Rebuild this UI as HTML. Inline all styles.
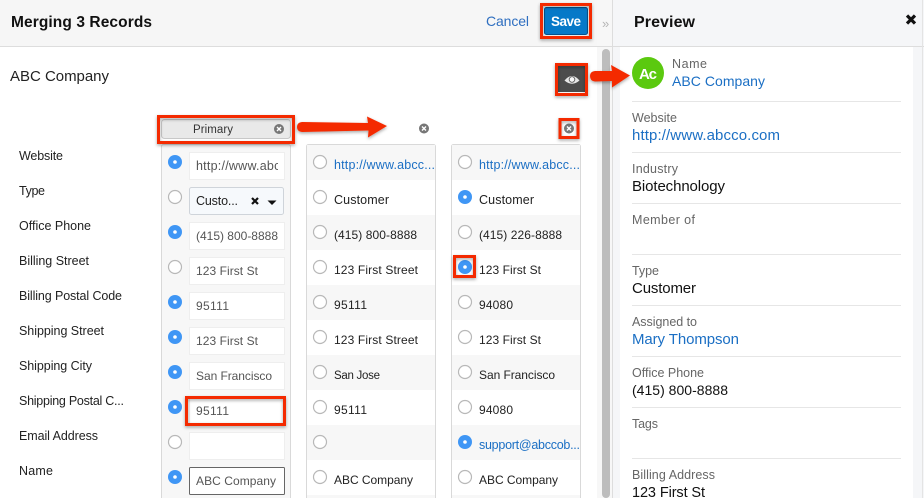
<!DOCTYPE html>
<html><head><meta charset="utf-8"><style>
html,body{margin:0;padding:0;background:#fff;width:924px;height:498px;overflow:hidden}
svg{display:block}
text{font-family:"Liberation Sans",sans-serif;font-size:12.5px;fill:#222}
.n{font-size:12px}
.g{fill:#555}
.v{fill:#111;font-size:15px}
.l{fill:#1b6fc4;font-size:15px}
.p{fill:#666}
.d{fill:#1b6fc4;font-size:12.5px}
.ln{stroke:#e6e6e6;stroke-width:1}
.inp{fill:#fff;stroke:#eee;stroke-width:1}
.off{fill:#fff;stroke:#b8b8b8;stroke-width:1.2}
.red{fill:none;stroke:#f42a05;stroke-width:3}
</style></head><body>
<svg width="924" height="498" viewBox="0 0 924 498" xmlns="http://www.w3.org/2000/svg">
<defs>
<filter id="s" x="-20%" y="-40%" width="140%" height="180%"><feDropShadow dx="0" dy="1.5" stdDeviation="1.5" flood-color="#000" flood-opacity=".35"/></filter>
</defs>
<rect width="924" height="498" fill="#fff"/>
<!-- header -->
<rect x="0" y="0" width="612" height="46" fill="#f6f6f6"/>
<rect x="612" y="0" width="312" height="498" fill="#f5f6f8"/>
<rect x="620" y="47" width="293" height="451" fill="#fff"/>
<rect x="597" y="0" width="15" height="498" fill="#f7f7f7"/>
<rect x="0" y="46" width="924" height="1" fill="#ddd"/>
<rect x="612" y="0" width="1" height="498" fill="#ddd"/>
<rect x="922" y="0" width="1" height="498" fill="#e4e4e4"/>
<rect x="602" y="49" width="8" height="449" rx="4" fill="#bdbdbd"/>
<text x="11" y="27" textLength="141" style="font-size:15.5px;font-weight:bold;fill:#111">Merging 3 Records</text>
<text x="486" y="26" textLength="43" style="font-size:14px;fill:#2f6fc0">Cancel</text>
<rect x="544.500" y="7.500" width="43" height="27" rx="2" fill="#0679c8" stroke="#04538f"/>
<text x="551" y="26" textLength="30" style="font-size:13.5px;font-weight:bold;fill:#fff">Save</text>
<text x="602" y="28" textLength="9" style="font-size:13px;fill:#b5b5b5">»</text>
<text x="634" y="27" textLength="61" style="font-size:16px;font-weight:bold;fill:#111">Preview</text>
<path d="M907 15.500l8 8M915 15.500l-8 8" stroke="#111" stroke-width="3.2" fill="none"/>

<text x="10" y="81" textLength="99" style="font-size:15px;fill:#222">ABC Company</text>

<!-- labels -->
<text x="19" y="160" textLength="44">Website</text>
<text x="19" y="195" textLength="26">Type</text>
<text x="19" y="230" textLength="72">Office Phone</text>
<text x="19" y="265" textLength="70">Billing Street</text>
<text x="19" y="300" textLength="103">Billing Postal Code</text>
<text x="19" y="335" textLength="85">Shipping Street</text>
<text x="19" y="370" textLength="73">Shipping City</text>
<text x="19" y="405" textLength="105">Shipping Postal C...</text>
<text x="19" y="440" textLength="79">Email Address</text>
<text x="19" y="475" textLength="34">Name</text>

<!-- column 1 -->
<rect x="161.500" y="144.500" width="129" height="360" rx="2" fill="#f7f7f7" stroke="#d9d9d9"/>
<rect x="189.500" y="152.500" width="95" height="27" class="inp"/>
<rect x="189.500" y="187.500" width="94" height="27" rx="2" fill="#f6f9fc" stroke="#cfd4da"/>
<rect x="189.500" y="222.500" width="95" height="27" class="inp"/>
<rect x="189.500" y="257.500" width="95" height="27" class="inp"/>
<rect x="189.500" y="292.500" width="95" height="27" class="inp"/>
<rect x="189.500" y="327.500" width="95" height="27" class="inp"/>
<rect x="189.500" y="362.500" width="95" height="27" class="inp"/>
<rect x="189.500" y="397.500" width="95" height="27" class="inp"/>
<rect x="189.500" y="432.500" width="95" height="27" class="inp"/>
<rect x="189.500" y="467.500" width="95" height="27" rx="1" fill="#fff" stroke="#666"/>
<svg x="196" y="150" width="82" height="30"><text x="0" y="20" textLength="98" class="g">http://www.abcco</text></svg>
<text x="196" y="205" textLength="42">Custo...</text>
<path d="M252 198l6 6M258 198l-6 6" stroke="#111" stroke-width="2.2" fill="none"/>
<path d="M267.500 200.500h9l-4.500 4.500z" fill="#111"/>
<text x="196" y="240" textLength="82" class="g n">(415) 800-8888</text>
<text x="196" y="275" textLength="62" class="g n">123 First St</text>
<text x="196" y="310" textLength="33" class="g n">95111</text>
<text x="196" y="345" textLength="62" class="g n">123 First St</text>
<text x="196" y="380" textLength="76" class="g n">San Francisco</text>
<text x="196" y="415" textLength="33" class="g n">95111</text>
<text x="196" y="485" textLength="80" class="g n">ABC Company</text>
<g id="r1">
<circle cx="175" cy="162" r="7" fill="#3f96f5"/><circle cx="175" cy="162" r="1.800" fill="#fff"/>
<circle cx="175" cy="197" r="6.500" class="off"/>
<circle cx="175" cy="232" r="7" fill="#3f96f5"/><circle cx="175" cy="232" r="1.800" fill="#fff"/>
<circle cx="175" cy="267" r="6.500" class="off"/>
<circle cx="175" cy="302" r="7" fill="#3f96f5"/><circle cx="175" cy="302" r="1.800" fill="#fff"/>
<circle cx="175" cy="337" r="7" fill="#3f96f5"/><circle cx="175" cy="337" r="1.800" fill="#fff"/>
<circle cx="175" cy="372" r="7" fill="#3f96f5"/><circle cx="175" cy="372" r="1.800" fill="#fff"/>
<circle cx="175" cy="407" r="7" fill="#3f96f5"/><circle cx="175" cy="407" r="1.800" fill="#fff"/>
<circle cx="175" cy="442" r="6.500" class="off"/>
<circle cx="175" cy="477" r="7" fill="#3f96f5"/><circle cx="175" cy="477" r="1.800" fill="#fff"/>
</g>

<!-- column 2 -->
<rect x="306.500" y="144.500" width="129" height="360" rx="2" fill="#fff" stroke="#d9d9d9"/>
<rect x="307" y="145" width="128" height="35" fill="#f7f7f7"/>
<rect x="307" y="215" width="128" height="35" fill="#f7f7f7"/>
<rect x="307" y="285" width="128" height="35" fill="#f7f7f7"/>
<rect x="307" y="355" width="128" height="35" fill="#f7f7f7"/>
<rect x="307" y="425" width="128" height="35" fill="#f7f7f7"/>
<rect x="307" y="495" width="128" height="3" fill="#f7f7f7"/>
<text x="334" y="169" textLength="101" class="d">http://www.abcc...</text>
<text x="334" y="204" textLength="55">Customer</text>
<text x="334" y="239" textLength="83" class="n">(415) 800-8888</text>
<text x="334" y="274" textLength="84" class="n">123 First Street</text>
<text x="334" y="309" textLength="33" class="n">95111</text>
<text x="334" y="344" textLength="84" class="n">123 First Street</text>
<text x="334" y="379" textLength="46" style="font-size:11.5px">San Jose</text>
<text x="334" y="414" textLength="33" class="n">95111</text>
<text x="334" y="484" textLength="79" class="n">ABC Company</text>
<circle cx="320" cy="162" r="6.500" class="off"/>
<circle cx="320" cy="197" r="6.500" class="off"/>
<circle cx="320" cy="232" r="6.500" class="off"/>
<circle cx="320" cy="267" r="6.500" class="off"/>
<circle cx="320" cy="302" r="6.500" class="off"/>
<circle cx="320" cy="337" r="6.500" class="off"/>
<circle cx="320" cy="372" r="6.500" class="off"/>
<circle cx="320" cy="407" r="6.500" class="off"/>
<circle cx="320" cy="442" r="6.500" class="off"/>
<circle cx="320" cy="477" r="6.500" class="off"/>

<!-- column 3 -->
<rect x="451.500" y="144.500" width="129" height="360" rx="2" fill="#fff" stroke="#d9d9d9"/>
<rect x="452" y="145" width="128" height="35" fill="#f7f7f7"/>
<rect x="452" y="215" width="128" height="35" fill="#f7f7f7"/>
<rect x="452" y="285" width="128" height="35" fill="#f7f7f7"/>
<rect x="452" y="355" width="128" height="35" fill="#f7f7f7"/>
<rect x="452" y="425" width="128" height="35" fill="#f7f7f7"/>
<rect x="452" y="495" width="128" height="3" fill="#f7f7f7"/>
<text x="479" y="169" textLength="101" class="d">http://www.abcc...</text>
<text x="479" y="204" textLength="55">Customer</text>
<text x="479" y="239" textLength="83" class="n">(415) 226-8888</text>
<text x="479" y="274" textLength="62" class="n">123 First St</text>
<text x="479" y="309" textLength="34" class="n">94080</text>
<text x="479" y="344" textLength="62" class="n">123 First St</text>
<text x="479" y="379" textLength="76" class="n">San Francisco</text>
<text x="479" y="414" textLength="34" class="n">94080</text>
<text x="479" y="449" textLength="101" class="d">support@abccob...</text>
<text x="479" y="484" textLength="79" class="n">ABC Company</text>
<circle cx="465" cy="162" r="6.500" class="off"/>
<circle cx="465" cy="197" r="7" fill="#3f96f5"/><circle cx="465" cy="197" r="1.800" fill="#fff"/>
<circle cx="465" cy="232" r="6.500" class="off"/>
<circle cx="465" cy="267" r="7" fill="#3f96f5"/><circle cx="465" cy="267" r="1.800" fill="#fff"/>
<circle cx="465" cy="302" r="6.500" class="off"/>
<circle cx="465" cy="337" r="6.500" class="off"/>
<circle cx="465" cy="372" r="6.500" class="off"/>
<circle cx="465" cy="407" r="6.500" class="off"/>
<circle cx="465" cy="442" r="7" fill="#3f96f5"/><circle cx="465" cy="442" r="1.800" fill="#fff"/>
<circle cx="465" cy="477" r="6.500" class="off"/>

<!-- primary pill -->
<rect x="161.500" y="119.500" width="129" height="19" rx="3" fill="#e9e9e9" stroke="#c8c8c8"/>
<text x="193" y="133" textLength="40" style="font-size:11.5px;fill:#333">Primary</text>
<circle cx="279" cy="129" r="5" fill="#777"/><path d="M277 127l4 4M281 127l-4 4" stroke="#fff" stroke-width="1.400"/>
<circle cx="424" cy="128.500" r="5" fill="#777"/><path d="M422 126.500l4 4M426 126.500l-4 4" stroke="#fff" stroke-width="1.400"/>
<circle cx="569" cy="128.500" r="5" fill="#777"/><path d="M567 126.500l4 4M571 126.500l-4 4" stroke="#fff" stroke-width="1.400"/>

<!-- eye button -->
<rect x="558" y="66" width="27" height="26" fill="#4c4c4c"/>
<path d="M564.500 80.500q7.500-9 15 0q-7.500 6.500-15 0z" fill="#e6e6e6"/>
<circle cx="572" cy="79.500" r="2.800" fill="#f8f8f8" stroke="#5c5c5c" stroke-width=".9"/>

<!-- avatar -->
<circle cx="648" cy="73" r="16" fill="#5bc90f"/>
<text x="639" y="79" textLength="18" style="font-size:15px;font-weight:bold;fill:#fff">Ac</text>

<!-- preview content -->
<text x="672" y="68" textLength="35" class="p">Name</text>
<text x="672" y="86" textLength="93" class="l" style="font-size:14px">ABC Company</text>
<line x1="632" x2="901" y1="101.500" y2="101.500" class="ln"/>
<text x="632" y="122" textLength="45" class="p">Website</text>
<text x="632" y="140" textLength="148" class="l">http://www.abcco.com</text>
<line x1="632" x2="901" y1="152.500" y2="152.500" class="ln"/>
<text x="632" y="173" textLength="46" class="p">Industry</text>
<text x="632" y="191" textLength="93" class="v">Biotechnology</text>
<line x1="632" x2="901" y1="203.500" y2="203.500" class="ln"/>
<text x="632" y="224" textLength="63" class="p">Member of</text>
<line x1="632" x2="901" y1="254.500" y2="254.500" class="ln"/>
<text x="632" y="275" textLength="27" class="p">Type</text>
<text x="632" y="293" textLength="64" class="v">Customer</text>
<line x1="632" x2="901" y1="305.500" y2="305.500" class="ln"/>
<text x="632" y="326" textLength="65" class="p">Assigned to</text>
<text x="632" y="344" textLength="107" class="l">Mary Thompson</text>
<line x1="632" x2="901" y1="356.500" y2="356.500" class="ln"/>
<text x="632" y="377" textLength="72" class="p">Office Phone</text>
<text x="632" y="395" textLength="96" class="v" style="font-size:14px">(415) 800-8888</text>
<line x1="632" x2="901" y1="407.500" y2="407.500" class="ln"/>
<text x="632" y="428" textLength="26" class="p">Tags</text>
<line x1="632" x2="901" y1="458.500" y2="458.500" class="ln"/>
<text x="632" y="479" textLength="83" class="p">Billing Address</text>
<text x="632" y="497" textLength="73" class="v" style="font-size:14.5px">123 First St</text>

<!-- annotations -->
<g filter="url(#s)">
<rect x="158.500" y="116.500" width="135" height="26" class="red"/>
<rect x="541.500" y="4.500" width="49" height="33" class="red"/>
<rect x="556.500" y="64.500" width="30" height="30" class="red"/>
<rect x="560" y="119.500" width="18" height="18" class="red"/>
<rect x="454.500" y="256.500" width="20" height="20" class="red"/>
<rect x="186.500" y="397.500" width="98" height="27" class="red"/>
<path d="M302 122L368 123L367 116.500L387 126L368 137.500L368.500 130.500L302 132Q297 131.500 297 127Q297 122.500 302 122Z" fill="#f42a05"/>
<path d="M595 71L612 71L611 65L630 75.500L612 87.500L612 81L595 81.500Q590 81 590 76Q590 71.500 595 71Z" fill="#f42a05"/>
</g>
</svg>
</body></html>
